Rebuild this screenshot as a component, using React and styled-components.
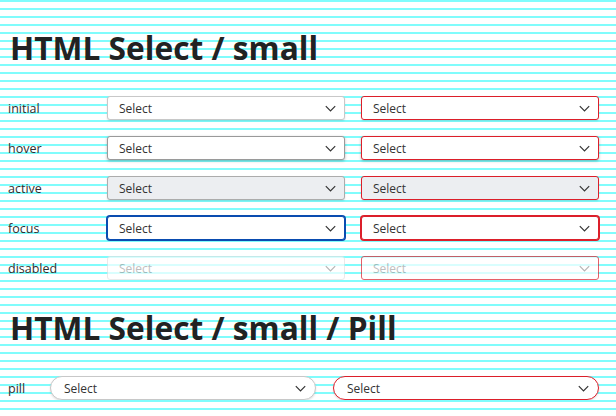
import React from 'react';
import styled, { createGlobalStyle, css } from 'styled-components';

const GlobalStyle = createGlobalStyle`
  html {
    min-height: 100%;
    background-color: #fff;
    background-image: linear-gradient(
      to bottom,
      #80fcfc 0px,
      #80fcfc 2px,
      #ffffff 2px,
      #ffffff 8px
    );
    background-size: 100% 8px;
    background-repeat: repeat;
  }
  body {
    margin: 8px;
    font-family: "Open Sans", "Liberation Sans", sans-serif;
    color: #333;
  }
`;

const Page = styled.div`
  display: flex;
  flex-direction: column;
`;

const Title = styled.h2`
  margin: ${(p) => (p.$first ? '20px' : '28px')} 0 0 2px;
  font-size: 31.7px;
  line-height: 40px;
  font-weight: 700;
  color: #222;
`;

const Grid = styled.div`
  display: grid;
  grid-template-columns: ${(p) => p.$columns};
  column-gap: ${(p) => p.$gap}px;
  row-gap: 16px;
  align-items: center;
  margin-top: ${(p) => p.$top}px;
`;

const Label = styled.span`
  font-size: 12.5px;
  color: #2e2e2e;
`;

const Field = styled.div`
  position: relative;
  height: 24px;
`;

const red = '#dc1f2a';

const stateStyles = {
  initial: css`
    border-color: #c8c8c8;
    box-shadow: 0 1px 2px rgba(0, 0, 0, 0.12);
  `,
  hover: css`
    border-color: #9a9a9a;
    box-shadow: 0 1px 3px rgba(0, 0, 0, 0.28);
  `,
  active: css`
    border-color: #acacac;
    background: #eceef1;
    box-shadow: 0 1px 2px rgba(0, 0, 0, 0.12);
  `,
  focus: css`
    border-color: #0a4cb0;
    box-shadow: 0 0 0 1px #0a4cb0;
  `,
  disabled: css`
    border-color: #e2e2e2;
    color: #a3a3a3;
  `,
};

const NativeSelect = styled.select`
  appearance: none;
  display: block;
  width: 100%;
  height: 24px;
  box-sizing: border-box;
  margin: 0;
  padding: 0 28px 0 ${(p) => (p.$pill ? 13 : 11)}px;
  font-family: "Open Sans", "Liberation Sans", sans-serif;
  font-size: 12px;
  color: #333;
  background: #fff;
  border: 1px solid #c8c8c8;
  border-radius: ${(p) => (p.$pill ? '12px' : '3px')};
  outline: none;
  ${(p) => stateStyles[p.$state]}
  ${(p) =>
    p.$error &&
    css`
      border-color: ${red};
    `}
  ${(p) =>
    p.$error &&
    p.$state === 'focus' &&
    css`
      box-shadow: 0 0 0 1px ${red};
    `}
`;

const Chevron = styled.svg`
  position: absolute;
  right: ${(p) => (p.$pill ? 10 : 9)}px;
  top: 9px;
  width: 11px;
  height: 7px;
  pointer-events: none;
  stroke: ${(p) => (p.$disabled ? '#b5b5b5' : '#333')};
`;

function Select({ state = 'initial', error, pill }) {
  return (
    <Field>
      <NativeSelect
        $state={state}
        $error={error}
        $pill={pill}
        disabled={state === 'disabled'}
        defaultValue=""
      >
        <option value="">Select</option>
      </NativeSelect>
      <Chevron viewBox="0 0 11 7" $pill={pill} $disabled={state === 'disabled'}>
        <path d="M0.8 1.2l4.7 4.7 4.7-4.7" fill="none" strokeWidth="1.2" />
      </Chevron>
    </Field>
  );
}

const states = ['initial', 'hover', 'active', 'focus', 'disabled'];

export default function App() {
  return (
    <Page>
      <GlobalStyle />
      <Title $first>HTML Select / small</Title>
      <Grid $columns="83px 238px 238px" $gap={16} $top={28}>
        {states.map((s) => (
          <React.Fragment key={s}>
            <Label>{s}</Label>
            <Select state={s} />
            <Select state={s} error />
          </React.Fragment>
        ))}
      </Grid>
      <Title>HTML Select / small / Pill</Title>
      <Grid $columns="25px 266px 266px" $gap={17} $top={28}>
        <Label>pill</Label>
        <Select pill />
        <Select pill error />
      </Grid>
    </Page>
  );
}
